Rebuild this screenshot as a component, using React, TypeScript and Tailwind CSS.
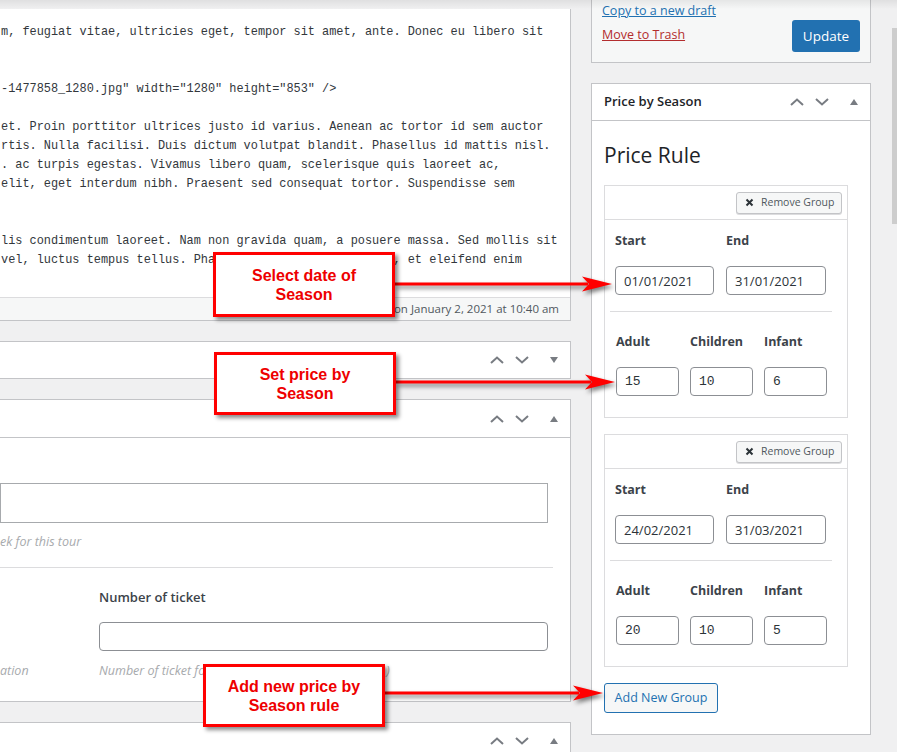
import React from "react";

const editorLines = [
  "m, feugiat vitae, ultricies eget, tempor sit amet, ante. Donec eu libero sit",
  "",
  "",
  '-1477858_1280.jpg" width="1280" height="853" />',
  "",
  "et. Proin porttitor ultrices justo id varius. Aenean ac tortor id sem auctor",
  "rtis. Nulla facilisi. Duis dictum volutpat blandit. Phasellus id mattis nisl.",
  ". ac turpis egestas. Vivamus libero quam, scelerisque quis laoreet ac,",
  "elit, eget interdum nibh. Praesent sed consequat tortor. Suspendisse sem",
  "",
  "",
  "lis condimentum laoreet. Nam non gravida quam, a posuere massa. Sed mollis sit",
  "vel, luctus tempus tellus. Phasellus quis tellus rutrum, et eleifend enim",
];

const groups = [
  { start: "01/01/2021", end: "31/01/2021", adult: "15", children: "10", infant: "6" },
  { start: "24/02/2021", end: "31/03/2021", adult: "20", children: "10", infant: "5" },
];

// the ^ v ▲ buttons on a postbox header
const Handles = ({ open = true }: { open?: boolean }) => (
  <div className="flex items-center pr-[12px]">
    <svg width="14" height="8" viewBox="0 0 14 8">
      <path d="M1 7 L7 1.5 L13 7" fill="none" stroke="#787c82" strokeWidth="2" />
    </svg>
    <svg width="14" height="8" viewBox="0 0 14 8" className="ml-[11px]">
      <path d="M1 1 L7 6.5 L13 1" fill="none" stroke="#787c82" strokeWidth="2" />
    </svg>
    <svg width="8" height="6" viewBox="0 0 8 6" className="ml-[21px]">
      <path d={open ? "M0 6 L4 0 L8 6 Z" : "M0 0 L8 0 L4 6 Z"} fill="#787c82" />
    </svg>
  </div>
);

const Field = ({ label, value, width, mono }: { label: string; value: string; width: string; mono?: boolean }) => (
  <div className="flex flex-col">
    <div className="text-[12.5px] font-bold leading-[20px] text-[#3c434a]">{label}</div>
    <input
      readOnly
      value={value}
      className={`mt-[15px] h-[29px] ${width} rounded-[4px] border border-[#8c8f94] bg-white pl-[8px] text-[#2c3338] outline-none ${
        mono ? "font-['Liberation_Mono',monospace] text-[13px]" : "text-[13px]"
      }`}
    />
  </div>
);

const Group = ({ g }: { g: (typeof groups)[number] }) => (
  <div className="w-[244px] border border-[#dcdcde]">
    <div className="flex h-[34px] items-center justify-end border-b border-[#dcdcde] pr-[5px]">
      <button className="flex h-[22px] w-[106px] items-center rounded-[3px] border border-[#c3c4c7] bg-[#f6f7f7] pl-[8px] text-[10.5px] text-[#50575e] shadow-[0_1px_0_#dcdcde]">
        <svg width="9" height="9" viewBox="0 0 9 9">
          <path d="M1.5 1.5 L7.5 7.5 M7.5 1.5 L1.5 7.5" stroke="#2c3338" strokeWidth="2" />
        </svg>
        <span className="ml-[7px]">Remove Group</span>
      </button>
    </div>
    <div className="flex flex-col pb-[21px]">
      <div className="ml-[10px] mt-[11px] flex gap-[12px]">
        <Field label="Start" value={g.start} width="w-[99px]" />
        <Field label="End" value={g.end} width="w-[100px]" />
      </div>
      <div className="ml-[5px] mr-[15px] mt-[16px] h-px bg-[#dcdcde]" />
      <div className="ml-[11px] mt-[20px] flex gap-[11px]">
        <Field label="Adult" value={g.adult} width="w-[63px]" mono />
        <Field label="Children" value={g.children} width="w-[63px]" mono />
        <Field label="Infant" value={g.infant} width="w-[63px]" mono />
      </div>
    </div>
  </div>
);

const Note = ({ className, lines }: { className: string; lines: string[] }) => (
  <div
    className={`absolute flex w-[182px] flex-col items-center justify-center border-[3px] border-[#ff0000] bg-white font-['Liberation_Sans',Arial,sans-serif] text-[16px] font-bold leading-[19px] text-[#ee0000] shadow-[3px_3px_4px_rgba(0,0,0,0.45)] ${className}`}
  >
    {lines.map((l) => (
      <div key={l}>{l}</div>
    ))}
  </div>
);

const Arrow = ({ className, len }: { className: string; len: number }) => (
  <svg
    width={len}
    height="20"
    viewBox={`0 0 ${len} 20`}
    className={`absolute overflow-visible drop-shadow-[2px_3px_2px_rgba(0,0,0,0.5)] ${className}`}
  >
    <line x1="0" y1="10" x2={len - 24} y2="10" stroke="#ff0000" strokeWidth="3" />
    <path d={`M${len} 10 L${len - 30} 2.5 L${len - 23} 10 L${len - 30} 17.5 Z`} fill="#ff0000" />
  </svg>
);

export default function App() {
  return (
    <div className="relative flex h-[752px] w-[897px] overflow-hidden bg-[#f0f0f1] font-['Open_Sans',sans-serif] text-[#1d2327]">
      {/* main column */}
      <div className="flex w-[571px] shrink-0 flex-col pt-[9px]">
        <div className="shrink-0 border-b border-r border-[#c3c4c7] bg-white">
          <div className="h-[288px] overflow-hidden whitespace-pre pl-[1px] pt-[14px] font-['Liberation_Mono',monospace] text-[11.9px] leading-[19px] text-[#32373c]">
            {editorLines.map((l, i) => (
              <div key={i} className="h-[19px]">
                {l}
              </div>
            ))}
          </div>
          <div className="flex h-[23px] items-center justify-end border-t border-[#dcdcde] bg-[#f6f7f7] pr-[11px] text-[11.5px] text-[#50575e]">
            on January 2, 2021 at 10:40 am
          </div>
        </div>

        <div className="mt-[20px] flex h-[38px] shrink-0 items-center justify-end border-y border-r border-[#c3c4c7] bg-white">
          <Handles open={false} />
        </div>

        <div className="mt-[20px] shrink-0 border-y border-r border-[#c3c4c7] bg-white">
          <div className="flex h-[38px] items-center justify-end border-b border-[#c3c4c7]">
            <Handles />
          </div>
          <div className="flex flex-col pb-[21px] pt-[45px]">
            <div className="mr-[22px] h-[40px] border border-[#a7aaad]" />
            <div className="mt-[10px] text-[12.5px] italic leading-[18px] text-[#a7aaad]">ek for this tour</div>
            <div className="mr-[17px] mt-[16px] h-px bg-[#dcdcde]" />
            <div className="mt-[20px] flex">
              <div className="flex w-[99px] flex-col justify-end">
                <div className="text-[12.5px] italic leading-[18px] text-[#a7aaad]">ation</div>
              </div>
              <div className="flex flex-1 flex-col pr-[22px]">
                <div className="text-[13px] font-semibold leading-[18px] text-[#3c434a]">Number of ticket</div>
                <div className="mt-[16px] h-[29px] rounded-[4px] border border-[#8c8f94]" />
                <div className="mt-[11px] text-[12.5px] italic leading-[18px] text-[#a7aaad]">
                  Number of ticket for every date ( an integer number )
                </div>
              </div>
            </div>
          </div>
        </div>

        <div className="mt-[20px] flex h-[38px] shrink-0 items-center justify-end border-y border-r border-[#c3c4c7] bg-white">
          <Handles />
        </div>
      </div>

      {/* sidebar */}
      <div className="ml-[20px] flex w-[280px] shrink-0 flex-col">
        <div className="flex h-[63px] shrink-0 justify-between border-x border-b border-[#c3c4c7] bg-[#f6f7f7] pl-[10px] pr-[10px]">
          <div className="flex flex-col pt-[2px] text-[12.5px] leading-[18px]">
            <a className="text-[#2271b1] underline">Copy to a new draft</a>
            <a className="mt-[6px] text-[#b32d2e] underline">Move to Trash</a>
          </div>
          <button className="mt-[20px] h-[32px] w-[68px] rounded-[3px] bg-[#2271b1] text-[13.5px] text-white">Update</button>
        </div>

        <div className="mt-[20px] shrink-0 border border-[#c3c4c7] bg-white">
          <div className="flex h-[37px] items-center justify-between border-b border-[#c3c4c7] pl-[12px]">
            <div className="text-[13px] font-semibold">Price by Season</div>
            <Handles />
          </div>
          <div className="flex flex-col px-[12px] pb-[21px] pt-[20px]">
            <div className="text-[21px] leading-[28px] text-[#1d2327]">Price Rule</div>
            <div className="mt-[16px] flex flex-col gap-[16px]">
              {groups.map((g, i) => (
                <Group key={i} g={g} />
              ))}
            </div>
            <button className="mt-[16px] h-[30px] w-[114px] rounded-[3px] border border-[#2271b1] bg-[#f6f7f7] text-[12.5px] text-[#2271b1]">
              Add New Group
            </button>
          </div>
        </div>
      </div>

      {/* scrollbar */}
      <div className="ml-[20px] w-[6px] shrink-0">
        <div className="ml-[1px] mt-[28px] h-[196px] w-[5px] bg-[#cdcdcd]" />
      </div>

      {/* top shade */}
      <div className="absolute left-0 right-0 top-0 h-[9px] bg-gradient-to-b from-black/[0.07] to-transparent" />

      {/* annotations */}
      <Arrow className="left-[395px] top-[274px]" len={217} />
      <Arrow className="left-[396px] top-[372px]" len={219} />
      <Arrow className="left-[385px] top-[683px]" len={218} />
      <Note className="left-[213px] top-[252px] h-[65px]" lines={["Select date of", "Season"]} />
      <Note className="left-[214px] top-[352px] h-[63px]" lines={["Set price by", "Season"]} />
      <Note className="left-[203px] top-[664px] h-[63px]" lines={["Add new price by", "Season rule"]} />
    </div>
  );
}
